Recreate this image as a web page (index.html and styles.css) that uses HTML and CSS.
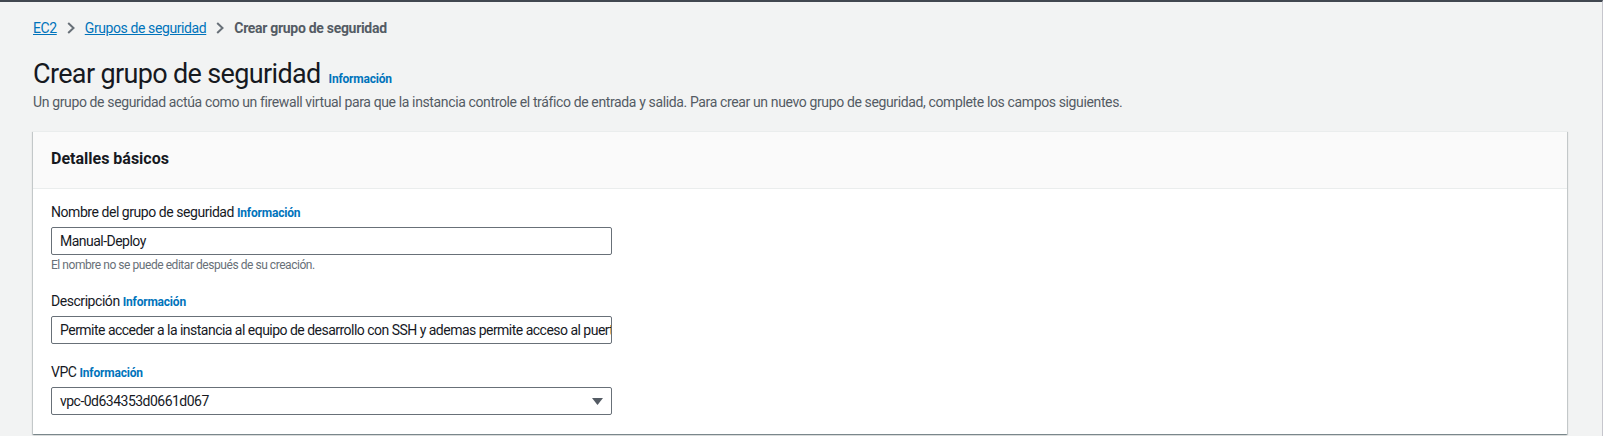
FILE: index.html
```html
<!DOCTYPE html>
<html lang="es">
<head>
<meta charset="utf-8">
<title>Crear grupo de seguridad</title>
<link rel="stylesheet" href="styles.css">
</head>
<body>
<div class="page">
  <nav class="breadcrumbs">
    <a class="crumb-link" href="#">EC2</a>
    <svg class="chev" width="8" height="12" viewBox="0 0 8 12"><path d="M1.2 1 L6.5 6 L1.2 11" fill="none" stroke="#687078" stroke-width="2"/></svg>
    <a class="crumb-link" href="#">Grupos de seguridad</a>
    <svg class="chev" width="8" height="12" viewBox="0 0 8 12"><path d="M1.2 1 L6.5 6 L1.2 11" fill="none" stroke="#687078" stroke-width="2"/></svg>
    <span class="crumb-current">Crear grupo de seguridad</span>
  </nav>

  <header class="page-header">
    <div class="title-row">
      <h1 class="title">Crear grupo de seguridad</h1>
      <a class="info" href="#">Información</a>
    </div>
    <p class="subtitle">Un grupo de seguridad actúa como un firewall virtual para que la instancia controle el tráfico de entrada y salida. Para crear un nuevo grupo de seguridad, complete los campos siguientes.</p>
  </header>

  <section class="card">
    <div class="card-header">
      <h2 class="card-title">Detalles básicos</h2>
    </div>
    <div class="card-body">
      <div class="field">
        <div class="label">Nombre del grupo de seguridad <a class="info" href="#">Información</a></div>
        <div class="input">Manual-Deploy</div>
        <div class="hint">El nombre no se puede editar después de su creación.</div>
      </div>
      <div class="field">
        <div class="label">Descripción <a class="info" href="#">Información</a></div>
        <div class="input">Permite acceder a la instancia al equipo de desarrollo con SSH y ademas permite acceso al puert</div>
      </div>
      <div class="field">
        <div class="label">VPC <a class="info" href="#">Información</a></div>
        <div class="input select">
          <span>vpc-0d634353d0661d067</span>
          <svg class="caret" width="11" height="7" viewBox="0 0 11 7"><path d="M0 0 L11 0 L5.5 7 Z" fill="#545b64"/></svg>
        </div>
      </div>
    </div>
  </section>
</div>
</body>
</html>
```

FILE: styles.css
```css
html, body {
  margin: 0;
  padding: 0;
}
body {
  background: #f2f3f3;
  font-family: Roboto, "Liberation Sans", sans-serif;
  color: #16191f;
  border-top: 2px solid #414750;
  border-right: 1px solid #c6c6cd;
  height: 436px;
  box-sizing: border-box;
  overflow: hidden;
}
.page {
  padding: 0 35px 0 33px;
}
.breadcrumbs {
  display: flex;
  align-items: center;
  gap: 10px;
  padding-top: 16px;
  height: 20px;
  font-size: 14px;
  line-height: 20px;
  letter-spacing: -0.4px;
}
.crumb-link {
  color: #0073bb;
  text-decoration: underline;
}
.chev {
  display: block;
}
.crumb-current {
  color: #545b64;
  font-weight: 700;
  letter-spacing: -0.3px;
}
.page-header {
  padding-top: 19px;
}
.title-row {
  display: flex;
  align-items: baseline;
  gap: 8px;
}
.title {
  margin: 0;
  font-size: 27px;
  line-height: 35px;
  font-weight: 400;
  letter-spacing: -0.65px;
  color: #16191f;
}
.info {
  color: #0073bb;
  font-size: 12px;
  font-weight: 700;
  letter-spacing: -0.2px;
  text-decoration: none;
}
.subtitle {
  margin: 0;
  font-size: 14px;
  line-height: 20px;
  letter-spacing: -0.37px;
  color: #545b64;
}
.card {
  margin-top: 19px;
  background: #fff;
  box-shadow: 0 1px 1px 0 rgba(0, 28, 36, 0.3), 1px 1px 1px 0 rgba(0, 28, 36, 0.15), -1px 1px 1px 0 rgba(0, 28, 36, 0.15);
  border-top: 1px solid #eaeded;
}
.card-header {
  background: #fafafa;
  border-bottom: 1px solid #eaeded;
  height: 57px;
  box-sizing: border-box;
  padding: 0 18px 3px;
  display: flex;
  align-items: center;
}
.card-title {
  margin: 0;
  font-size: 16px;
  font-weight: 700;
  line-height: 22px;
}
.card-body {
  padding: 13px 18px 19px;
  display: flex;
  flex-direction: column;
  gap: 18px;
}
.field {
  display: flex;
  flex-direction: column;
}
.label {
  font-size: 14px;
  line-height: 20px;
  letter-spacing: -0.45px;
  color: #16191f;
  margin-bottom: 4px;
}
.input {
  width: 561px;
  height: 28px;
  box-sizing: border-box;
  border: 1px solid #687078;
  border-radius: 2px;
  padding: 0 8px;
  font-size: 14px;
  line-height: 26px;
  letter-spacing: -0.52px;
  color: #16191f;
  white-space: nowrap;
  overflow: hidden;
}
.select {
  display: flex;
  align-items: center;
  justify-content: space-between;
}
.caret {
  display: block;
}
.hint {
  font-size: 12px;
  line-height: 16px;
  letter-spacing: -0.45px;
  color: #687078;
  margin-top: 2px;
}
```
